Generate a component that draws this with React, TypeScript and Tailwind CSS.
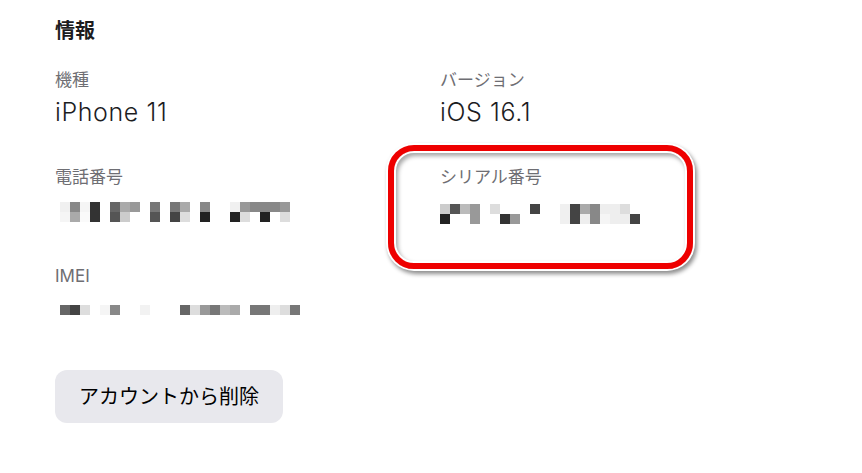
type Cell = string | null;

// mosaic columns, 10px blocks: [top, bottom]
const phoneBlocks: [Cell, Cell][] = [
    ['#f0f0f0', '#f5f5f5'],
    ['#888888', '#aaaaaa'],
    ['#f5f5f5', '#fafafa'],
    ['#333333', '#333333'],
    [null, null],
    ['#666666', '#555555'],
    ['#aaaaaa', '#cccccc'],
    ['#999999', null],
    [null, null],
    ['#777777', '#555555'],
    [null, null],
    ['#777777', '#444444'],
    ['#aaaaaa', '#dddddd'],
    [null, null],
    ['#888888', '#222222'],
    [null, null],
    [null, null],
    ['#f0f0f0', '#222222'],
    ['#999999', '#dddddd'],
    ['#888888', null],
    ['#888888', '#222222'],
    ['#888888', null],
    ['#999999', '#dddddd'],
];

const imeiBlocks: Cell[] = [
    '#666666', '#444444', '#dddddd', null, '#f5f5f5', '#888888', null, null,
    '#f2f2f2', null, null, null, '#666666', '#dddddd', '#999999', '#777777',
    '#bbbbbb', '#aaaaaa', null, '#777777', '#777777', '#eeeeee', '#dddddd', '#777777',
];

const serialBlocks: [Cell, Cell][] = [
    ['#cccccc', '#222222'],
    ['#555555', null],
    ['#bbbbbb', null],
    ['#999999', '#999999'],
    [null, null],
    ['#dddddd', null],
    [null, '#333333'],
    [null, '#999999'],
    [null, null],
    ['#444444', null],
    [null, null],
    [null, null],
    ['#f0f0f0', '#f0f0f0'],
    ['#444444', '#444444'],
    ['#aaaaaa', '#eeeeee'],
    ['#888888', '#888888'],
    ['#eeeeee', '#f5f5f5'],
    ['#eeeeee', '#eeeeee'],
    ['#dddddd', '#eeeeee'],
    [null, '#444444'],
];

const Mosaic = ({ rows }: { rows: Cell[][] }) => {
    const cols = rows[0].length;
    return (
        <svg width={cols * 10} height={rows.length * 10} className="block">
            {rows.map((row, r) =>
                row.map((c, i) =>
                    c ? <rect key={`${r}-${i}`} x={i * 10} y={r * 10} width={10} height={10} fill={c} /> : null
                )
            )}
        </svg>
    );
};

const twoRows = (cols: [Cell, Cell][]) => [cols.map((c) => c[0]), cols.map((c) => c[1])];

const Label = ({ children }: { children: React.ReactNode }) => (
    <div className="text-[17px] leading-[24px] text-[#6e6e73]">{children}</div>
);

const Value = ({ children }: { children: React.ReactNode }) => (
    <div className="mt-[5px] text-[25px] leading-[30px] font-light tracking-[0.6px] text-[#1d1d1f]">{children}</div>
);

export default function App() {
    return (
        <div
            className="relative w-[862px] h-[473px] bg-white overflow-hidden"
            style={{ fontFamily: 'Inter, "Noto Sans CJK JP", sans-serif' }}
        >
            <div className="pl-[55px] pt-[17px]">
                <h2 className="text-[20px] leading-[28px] font-bold text-[#1d1d1f]">情報</h2>

                <div className="mt-[23px] grid grid-cols-[385px_1fr]">
                    <div>
                        <Label>機種</Label>
                        <Value>iPhone 11</Value>
                    </div>
                    <div>
                        <Label>バージョン</Label>
                        <Value>iOS 16.1</Value>
                    </div>

                    <div className="mt-[38px]">
                        <Label>電話番号</Label>
                        <div className="mt-[13px] pl-[5px]">
                            <Mosaic rows={twoRows(phoneBlocks)} />
                        </div>
                    </div>
                    <div className="mt-[38px]">
                        <Label>シリアル番号</Label>
                        <div className="mt-[15px]">
                            <Mosaic rows={twoRows(serialBlocks)} />
                        </div>
                    </div>

                    <div className="mt-[40px]">
                        <Label>IMEI</Label>
                        <div className="mt-[17px] pl-[5px]">
                            <Mosaic rows={[imeiBlocks]} />
                        </div>
                    </div>
                </div>

                <button className="mt-[55px] h-[53px] w-[228px] rounded-[12px] bg-[#e8e8ed] text-[20px] text-black">
                    アカウントから削除
                </button>
            </div>

            {/* annotation highlight */}
            <div className="absolute left-[388px] top-[145px] w-[305px] h-[124px] rounded-[26px] border-[6px] border-[#ee0000] shadow-[0_0_0_2px_#ffffff,2px_3px_4px_2px_rgba(0,0,0,0.45),inset_0_0_0_2px_#ffffff,inset_2px_3px_4px_2px_rgba(0,0,0,0.35)]" />
        </div>
    );
}
